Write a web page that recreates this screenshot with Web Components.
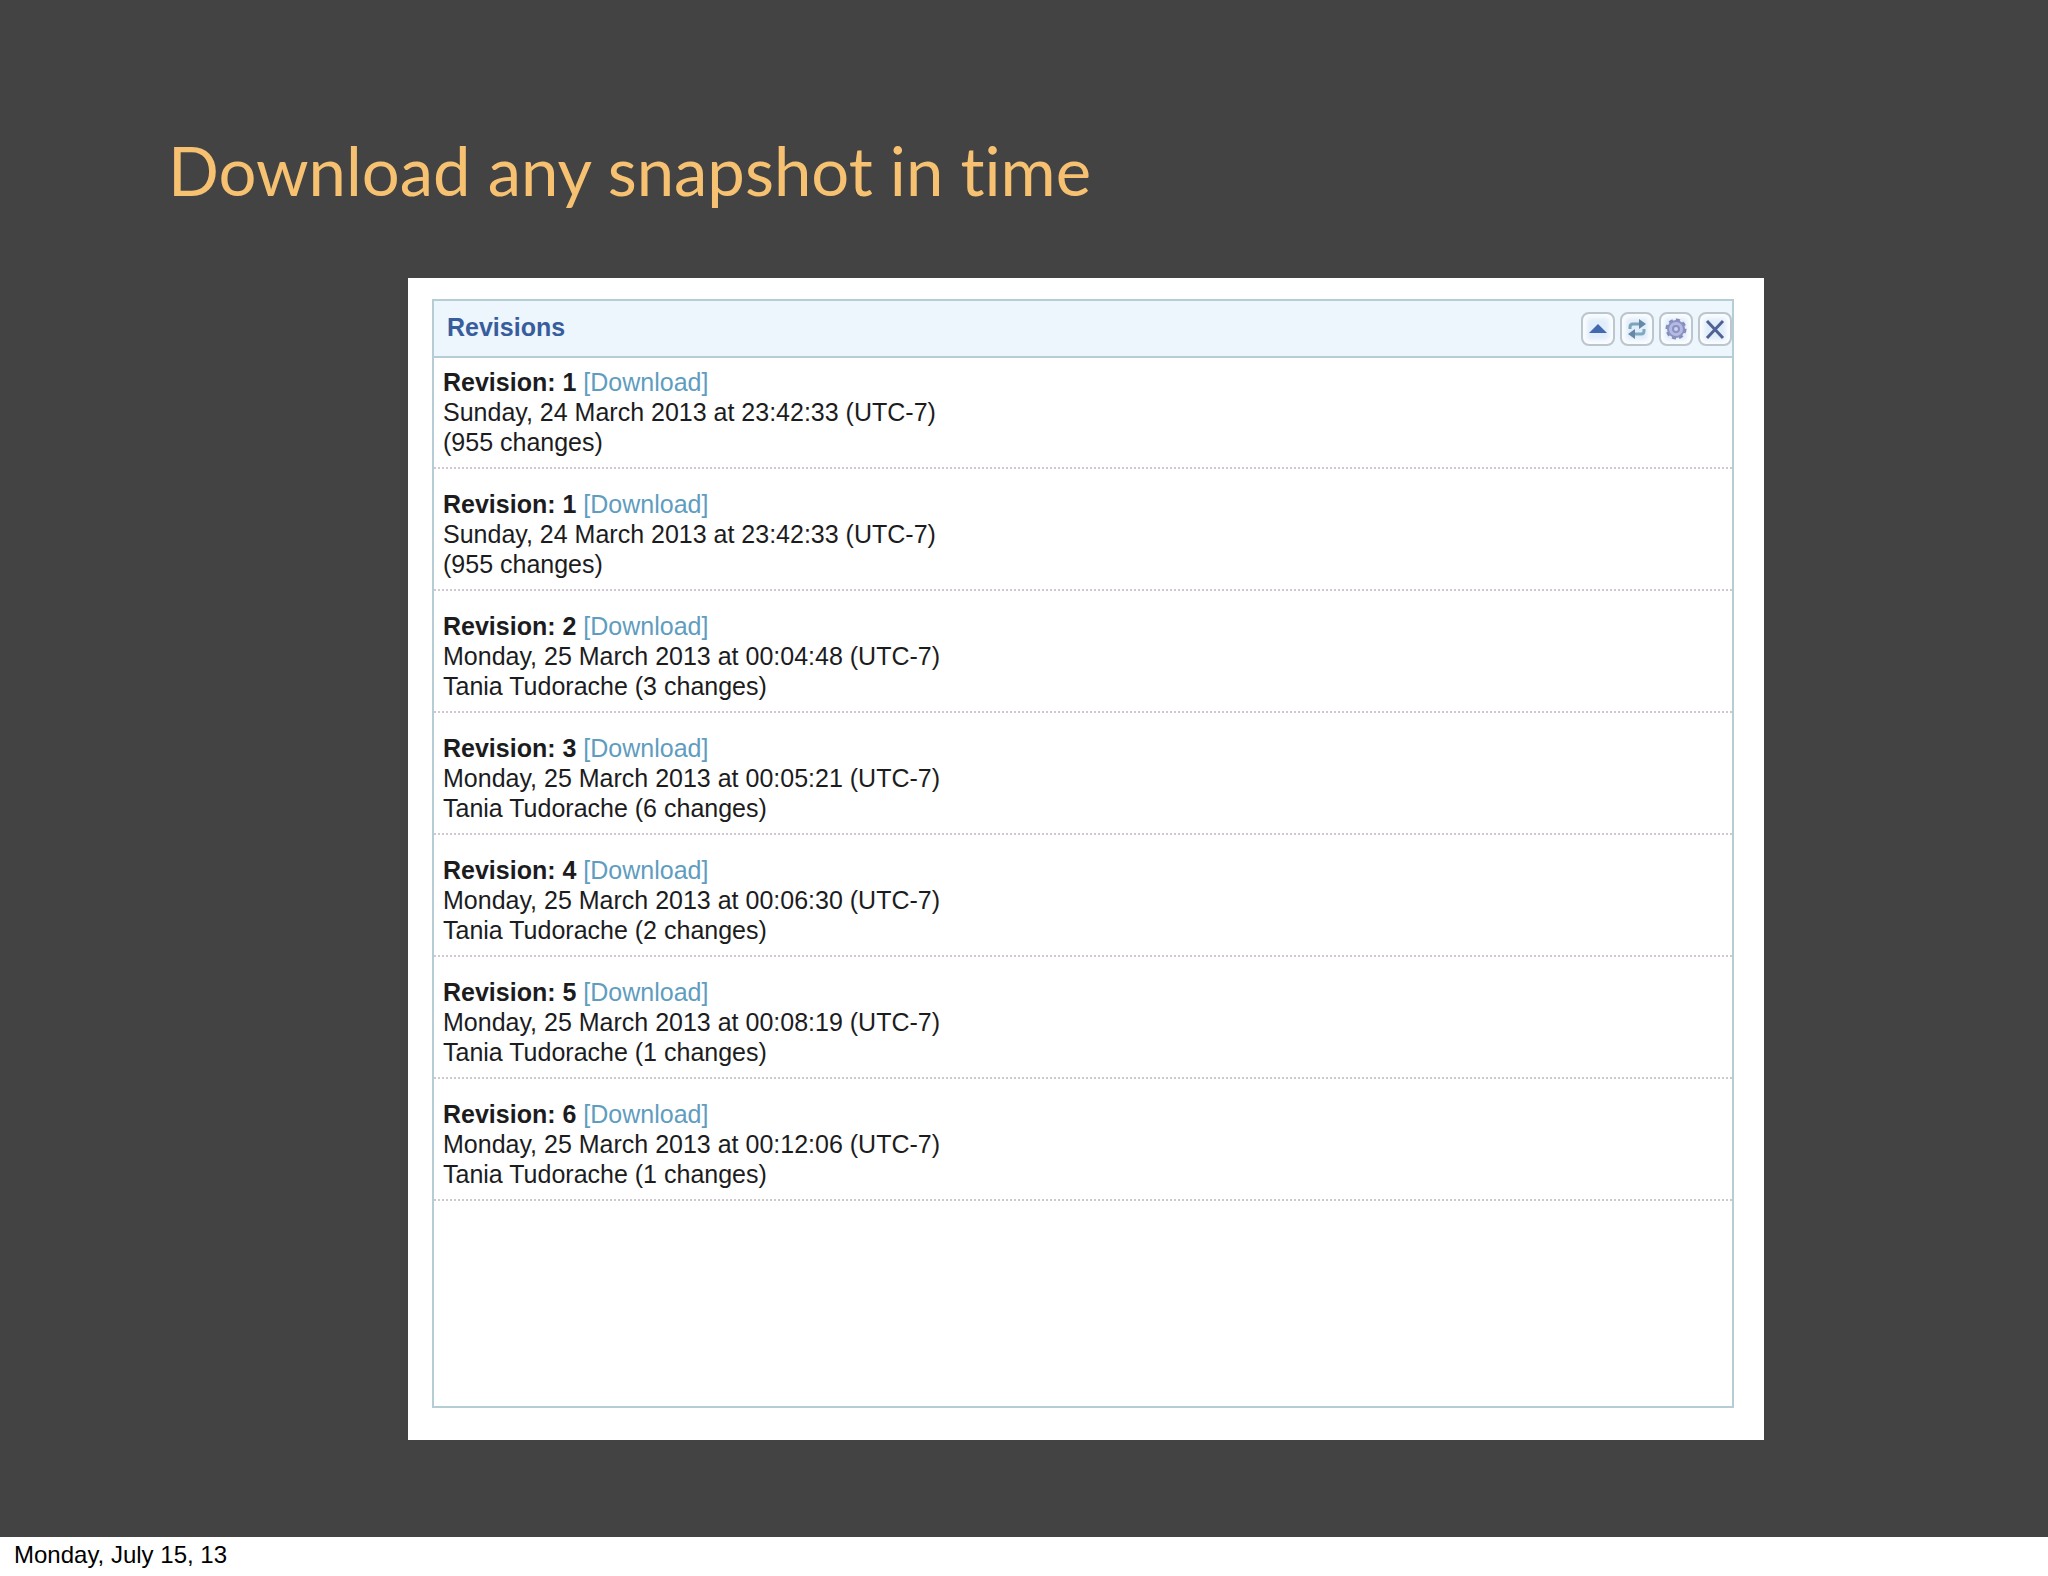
<!DOCTYPE html>
<html lang="en">
<head>
<meta charset="utf-8">
<title>Download any snapshot in time</title>
<style>
  :root {
    --slide: #444343;
    --heading: #f6c171;
    --panel-border: #b7cdd6;
    --panel-header: #edf5fd;
    --panel-title: #375d9c;
    --link: #5f9dc0;
    --text: #1c1c1e;
  }

  body {
    margin: 0;
    background-color: white;
    font-family: "Liberation Sans", Arial, sans-serif;
  }
</style>
</head>
<body>
<slide-page>
  <span slot="heading">Download any snapshot in time</span>
  <revisions-panel heading="Revisions">
    <revision-item number="1" date="Sunday, 24 March 2013 at 23:42:33 (UTC-7)" changes="955"></revision-item>
    <revision-item number="1" date="Sunday, 24 March 2013 at 23:42:33 (UTC-7)" changes="955"></revision-item>
    <revision-item number="2" date="Monday, 25 March 2013 at 00:04:48 (UTC-7)" author="Tania Tudorache" changes="3"></revision-item>
    <revision-item number="3" date="Monday, 25 March 2013 at 00:05:21 (UTC-7)" author="Tania Tudorache" changes="6"></revision-item>
    <revision-item number="4" date="Monday, 25 March 2013 at 00:06:30 (UTC-7)" author="Tania Tudorache" changes="2"></revision-item>
    <revision-item number="5" date="Monday, 25 March 2013 at 00:08:19 (UTC-7)" author="Tania Tudorache" changes="1"></revision-item>
    <revision-item number="6" date="Monday, 25 March 2013 at 00:12:06 (UTC-7)" author="Tania Tudorache" changes="1"></revision-item>
  </revisions-panel>
  <span slot="date">Monday, July 15, 13</span>
</slide-page>

<script>
const slideTemplate = document.createElement("template");
slideTemplate.innerHTML = `
      <main>
        <h1><slot name="heading"></slot></h1>
        <section class="content"><slot></slot></section>
      </main>
      <footer><slot name="date"></slot></footer>
      <style>
        :host {
          display: flex;
          flex-direction: column;
          min-height: 100vh;
        }

        main {
          flex: 1;
          background-color: var(--slide);
          padding-top: 128px;
          box-sizing: border-box;
        }

        h1 {
          margin: 0 0 66px;
          padding-left: 168px;
          color: var(--heading);
          font: 400 67px/84px "Gill Sans", Lato, sans-serif;
          font-variant-ligatures: none;
        }

        section[class="content"] {
          margin: 0 284px 0 408px;
          padding-bottom: 96px;
        }

        footer {
          padding: 3px 14px 6px;
          color: black;
          font-size: 24px;
          line-height: 30px;
        }
      </style>
`;
class SlidePage extends HTMLElement {
  connectedCallback() {
    if (!this.shadowRoot) {
      const shadowRoot = this.attachShadow({ mode: "open" });
      shadowRoot.appendChild(slideTemplate.content.cloneNode(true));
    }
  }
}

const panelTemplate = document.createElement("template");
panelTemplate.innerHTML = `
      <section class="panel">
        <header>
          <h2></h2>
          <nav>
            <icon-button icon="collapse" label="Collapse"></icon-button>
            <icon-button icon="refresh" label="Refresh"></icon-button>
            <icon-button icon="settings" label="Settings"></icon-button>
            <icon-button icon="close" label="Close"></icon-button>
          </nav>
        </header>
        <section class="list"><slot></slot></section>
      </section>
      <style>
        :host {
          display: block;
          background-color: white;
          padding: 21px 30px 32px 24px;
        }

        section[class="panel"] {
          border: 2px solid var(--panel-border);
        }

        header {
          display: flex;
          align-items: center;
          justify-content: space-between;
          height: 55px;
          padding-left: 13px;
          background-color: var(--panel-header);
          border-bottom: 2px solid var(--panel-border);
        }

        h2 {
          margin: 0;
          padding-bottom: 4px;
          color: var(--panel-title);
          font-size: 25px;
          line-height: 30px;
        }

        nav {
          display: flex;
          gap: 5px;
        }

        section[class="list"] {
          min-height: 1048px;
        }
      </style>
`;
class RevisionsPanel extends HTMLElement {
  connectedCallback() {
    if (!this.shadowRoot) {
      const shadowRoot = this.attachShadow({ mode: "open" });
      shadowRoot.appendChild(panelTemplate.content.cloneNode(true));
    }
    this.shadowRoot.querySelector("h2").textContent = this.getAttribute("heading");
  }
}

const itemTemplate = document.createElement("template");
itemTemplate.innerHTML = `
      <div><b></b> <a href="#">[Download]</a></div>
      <div class="date"></div>
      <div class="changes"></div>
      <style>
        :host {
          display: block;
          padding: 20px 9px 10px;
          border-bottom: 2px dotted #cfc8d0;
          color: var(--text);
          font-size: 25px;
          line-height: 30px;
        }

        :host(:first-child) {
          padding-top: 9px;
        }

        a {
          color: var(--link);
          text-decoration: none;
        }

        a:hover {
          text-decoration: underline;
        }
      </style>
`;
class RevisionItem extends HTMLElement {
  connectedCallback() {
    if (!this.shadowRoot) {
      const shadowRoot = this.attachShadow({ mode: "open" });
      shadowRoot.appendChild(itemTemplate.content.cloneNode(true));
    }
    const author = this.hasAttribute("author") ? this.getAttribute("author") + " " : "";
    this.shadowRoot.querySelector("b").textContent = `Revision: ${this.getAttribute("number")}`;
    this.shadowRoot.querySelector("div[class='date']").textContent = this.getAttribute("date");
    this.shadowRoot.querySelector("div[class='changes']").textContent = `${author}(${this.getAttribute("changes")} changes)`;
  }
}

const icons = {
  collapse: `<path d="M8 21 L17 12 L26 21 Z" fill="#4468b0"/>`,
  refresh: `
    <path d="M10 17 V15 Q10 12 13 12 H20" fill="none" stroke="#7fa3b8" stroke-width="3"/>
    <path d="M19 7 L26 12 L19 17 Z" fill="#6488a5"/>
    <path d="M24 17 V19 Q24 22 21 22 H15" fill="none" stroke="#7fa9c0" stroke-width="3"/>
    <path d="M15 17 L8 22 L15 27 Z" fill="#6488a5"/>`,
  settings: `
    <circle cx="17" cy="17" r="9" fill="none" stroke="#858cba" stroke-width="3" stroke-dasharray="4 3"/>
    <circle cx="17" cy="17" r="8" fill="#b4bae4" stroke="#8b91c0" stroke-width="2"/>
    <circle cx="17" cy="17" r="3" fill="#cdd2f2" stroke="#8b91c0" stroke-width="2"/>`,
  close: `<path d="M9 9 L25 26 M25 9 L9 26" fill="none" stroke="#4f6293" stroke-width="3"/>`
};
const buttonTemplate = document.createElement("template");
buttonTemplate.innerHTML = `
      <button type="button"><svg viewBox="0 0 34 34" aria-hidden="true"></svg></button>
      <style>
        :host {
          display: block;
        }

        button {
          display: block;
          width: 34px;
          height: 34px;
          padding: 0;
          border: 2px solid #bcc6cd;
          border-radius: 8px;
          background-color: #e0edfb;
          box-shadow: inset 0 0 4px 4px #fbfdff;
          cursor: pointer;
        }

        svg {
          display: block;
          width: 34px;
          height: 34px;
          margin: -2px;
        }
      </style>
`;
class IconButton extends HTMLElement {
  connectedCallback() {
    if (!this.shadowRoot) {
      const shadowRoot = this.attachShadow({ mode: "open" });
      shadowRoot.appendChild(buttonTemplate.content.cloneNode(true));
    }
    this.shadowRoot.querySelector("button").setAttribute("aria-label", this.getAttribute("label"));
    this.shadowRoot.querySelector("svg").innerHTML = icons[this.getAttribute("icon")];
  }
}

customElements.define("icon-button", IconButton);
customElements.define("revision-item", RevisionItem);
customElements.define("revisions-panel", RevisionsPanel);
customElements.define("slide-page", SlidePage);
</script>
</body>
</html>
